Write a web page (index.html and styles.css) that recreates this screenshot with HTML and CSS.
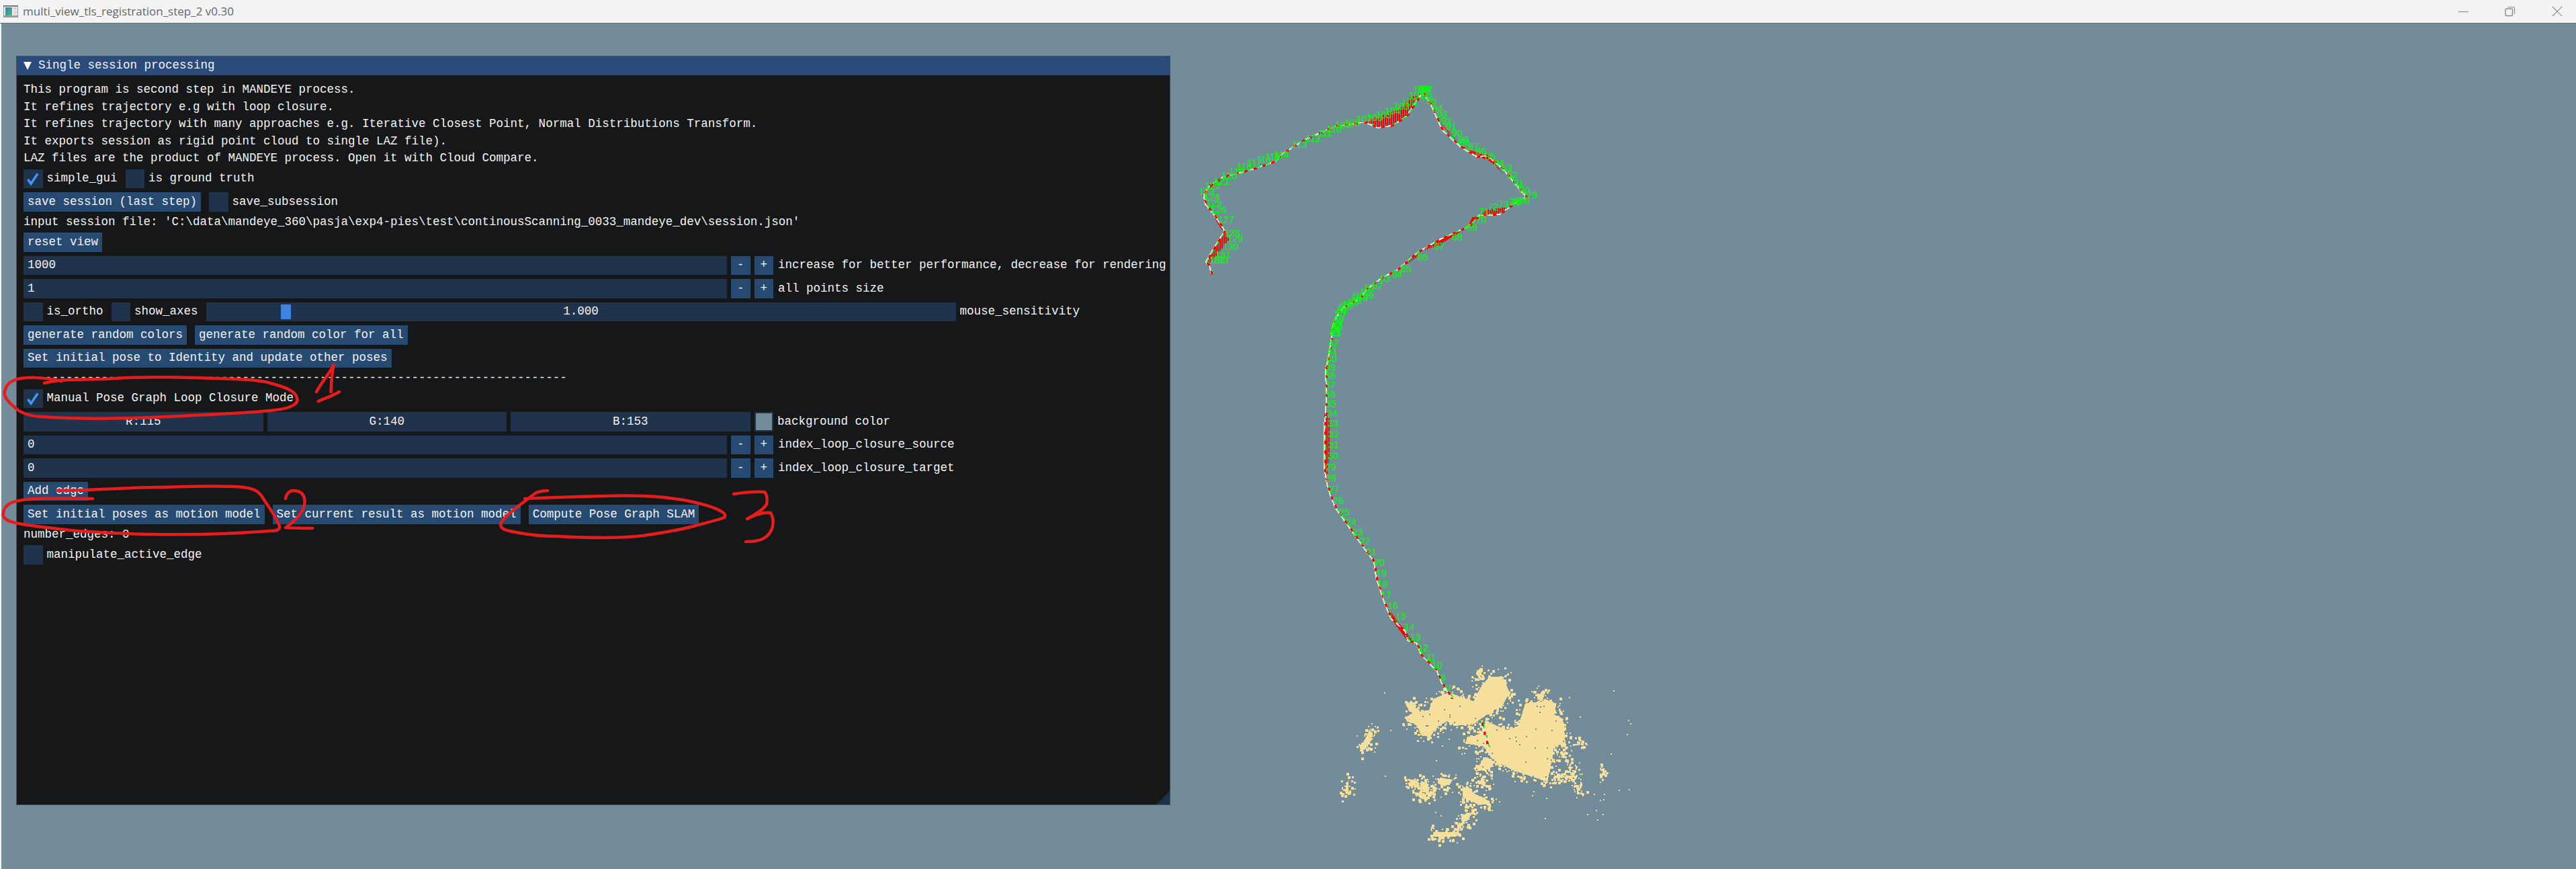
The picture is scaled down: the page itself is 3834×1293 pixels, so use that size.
FILE: index.html
```html
<!DOCTYPE html>
<html lang="en">

<head>
    <meta charset="UTF-8">
    <title>multi_view_tls_registration_step_2 v0.30</title>
    <link rel="stylesheet" href="styles.css">
</head>

<body>
    <div class="titlebar">
        <svg class="app-icon" width="22" height="18" viewBox="0 0 22 18">
            <defs>
                <linearGradient id="iconFill" x1="0" y1="0" x2="1" y2="1">
                    <stop offset="0" stop-color="#2f7fb8" />
                    <stop offset="1" stop-color="#4fc06a" />
                </linearGradient>
            </defs>
            <rect width="22" height="18" fill="#9a9a9a" />
            <rect y="0" width="22" height="1.5" fill="#6a6f78" />
            <rect x="1" y="2" width="20" height="13" fill="#eeeeee" />
            <rect x="3" y="3" width="10" height="12" fill="url(#iconFill)" />
            <rect x="15" y="3" width="5" height="3" fill="#c9d3dc" />
            <rect x="15" y="7" width="5" height="7" fill="#dcdcdc" />
        </svg>
        <span class="window-title">multi_view_tls_registration_step_2 v0.30</span>
        <div class="window-controls">
            <svg width="16" height="16" viewBox="0 0 16 16">
                <path d="M1 8.5H16" stroke="#8c8c8c" stroke-width="1.2" fill="none" />
            </svg>
            <svg width="16" height="16" viewBox="0 0 16 16">
                <rect x="1" y="4" width="10.5" height="10.5" rx="1.5" stroke="#8c8c8c" stroke-width="1.4" fill="none" />
                <path d="M4 1.5H12.5Q14.5 1.5 14.5 3.5V11.5" stroke="#8c8c8c" stroke-width="1.2" fill="none" />
            </svg>
            <svg width="16" height="16" viewBox="0 0 16 16">
                <path d="M1 1L15 15M15 1L1 15" stroke="#8c8c8c" stroke-width="1.2" fill="none" />
            </svg>
        </div>
    </div>

    <div class="viewport">
        <div class="panel">
            <div class="panel-header">
                <span class="arrow-down"></span>
                <span>Single session processing</span>
            </div>
            <div class="panel-body">
                <div class="text">This program is second step in MANDEYE process.</div>
                <div class="text">It refines trajectory e.g with loop closure.</div>
                <div class="text">It refines trajectory with many approaches e.g. Iterative Closest Point, Normal Distributions Transform.</div>
                <div class="text">It exports session as rigid point cloud to single LAZ file).</div>
                <div class="text">LAZ files are the product of MANDEYE process. Open it with Cloud Compare.</div>

                <div class="row">
                    <label class="check">
                        <span class="box"><svg width="28" height="28" viewBox="0 0 28 28"><path d="M6.5 15L11 21.5L21 6.5" stroke="#4296fa" stroke-width="3.5" fill="none" /></svg></span>
                        simple_gui
                    </label>
                    <label class="check"><span class="box"></span>is ground truth</label>
                </div>
                <div class="row">
                    <button class="btn">save session (last step)</button>
                    <label class="check"><span class="box"></span>save_subsession</label>
                </div>
                <div class="text">input session file: 'C:\data\mandeye_360\pasja\exp4-pies\test\continousScanning_0033_mandeye_dev\session.json'</div>
                <div class="row"><button class="btn">reset view</button></div>

                <div class="row row-tight">
                    <div class="field field-input">1000</div>
                    <button class="btn btn-step">-</button>
                    <button class="btn btn-step">+</button>
                    <span class="field-label">increase for better performance, decrease for rendering</span>
                </div>
                <div class="row row-tight">
                    <div class="field field-input">1</div>
                    <button class="btn btn-step">-</button>
                    <button class="btn btn-step">+</button>
                    <span class="field-label">all points size</span>
                </div>
                <div class="row">
                    <label class="check"><span class="box"></span>is_ortho</label>
                    <label class="check"><span class="box"></span>show_axes</label>
                    <div class="row-tight slider-wrap">
                        <div class="slider">
                            <span class="slider-grab"></span>
                            1.000
                        </div>
                        <span>mouse_sensitivity</span>
                    </div>
                </div>
                <div class="row">
                    <button class="btn">generate random colors</button>
                    <button class="btn">generate random color for all</button>
                </div>
                <div class="row"><button class="btn">Set initial pose to Identity and update other poses</button></div>
                <div class="text">-----------------------------------------------------------------------------</div>

                <div class="row">
                    <label class="check">
                        <span class="box"><svg width="28" height="28" viewBox="0 0 28 28"><path d="M6.5 15L11 21.5L21 6.5" stroke="#4296fa" stroke-width="3.5" fill="none" /></svg></span>
                        Manual Pose Graph Loop Closure Mode
                    </label>
                </div>
                <div class="row row-tight">
                    <div class="color-fields">
                        <div class="field field-center">R:115</div>
                        <div class="field field-center">G:140</div>
                        <div class="field field-center">B:153</div>
                    </div>
                    <span class="swatch"></span>
                    <span>background color</span>
                </div>
                <div class="row row-tight">
                    <div class="field field-input">0</div>
                    <button class="btn btn-step">-</button>
                    <button class="btn btn-step">+</button>
                    <span class="field-label">index_loop_closure_source</span>
                </div>
                <div class="row row-tight">
                    <div class="field field-input">0</div>
                    <button class="btn btn-step">-</button>
                    <button class="btn btn-step">+</button>
                    <span class="field-label">index_loop_closure_target</span>
                </div>
                <div class="row"><button class="btn">Add edge</button></div>
                <div class="row">
                    <button class="btn">Set initial poses as motion model</button>
                    <button class="btn">Set current result as motion model</button>
                    <button class="btn">Compute Pose Graph SLAM</button>
                </div>
                <div class="text">number_edges: 0</div>
                <div class="row">
                    <label class="check"><span class="box"></span>manipulate_active_edge</label>
                </div>
            </div>
            <span class="resize-grip"></span>
        </div>
    </div>

    <svg class="scene" id="scene" width="3834" height="1293" viewBox="0 0 3834 1293">
        <defs>
            <pattern id="hatch" width="3" height="3" patternUnits="userSpaceOnUse">
                <rect width="2" height="3" fill="#ff0000" />
            </pattern>
        </defs>
        <g id="cloud" class="crisp" fill="#f6df9a"></g>
        <g id="hatched" class="crisp" fill="url(#hatch)"></g>
        <g id="track" class="crisp" fill="none"></g>
        <g id="labels" class="point-label"></g>
        <g class="pen">
            <path d="M66 570C95 562 130 566 172 563C220 559 280 562 321 563C360 564 385 565 402 570C425 576 440 582 442 592C445 600 436 608 402 611C360 615 330 616 287 618C220 622 130 625 63 620C40 619 28 612 23 607C12 598 5 590 7 583C9 572 15 568 23 565C35 561 60 560 92 567" />
            <path d="M496.6 543C490 556 478 570 471 583M496.6 543C494 556 493 570 492.5 583M473.6 597C485 592 495 589 505 583" />
            <path d="M86 730C130 730 180 726 230 725C280 724 330 722 362 725C380 727 386 732 392 742C400 755 412 770 416 783C417 788 412 790 402 790C350 794 280 796 230 795C190 795 150 792 115 790C80 786 45 783 23 778C10 775 4 770 4.6 765C5 757 10 751 17 748C30 743 50 742 57 742C90 741 115 742 138 742" />
            <path d="M425 742C426 735 431 730 436 730C447 730 453 735 453.5 745C454 755 448 765 440 773C435 778 430 782 425 785C440 786 452 786 465 786" />
            <path d="M815 730C806 730 802 732 798 733C775 750 755 765 746 777C743 784 748 788 758 790C785 796 810 798 832 798C860 800 880 800 900 800C925 800 940 799 957 797C985 793 1010 789 1032 783C1050 778 1068 774 1078 770C1080 766 1079 764 1075 762C1065 755 1050 751 1032 747C1010 742 985 739 957 738C930 737 910 738 900 738C860 739 820 740 781 742" />
            <path d="M1092 735C1105 733 1125 731 1138 732C1142 736 1142 745 1141 750C1137 758 1125 765 1112 772C1120 768 1135 762 1147 763C1151 770 1151 775 1150 783C1148 792 1143 798 1135 802C1128 805 1118 806 1110 806" />
        </g>
    </svg>

    <script src="script.js"></script>
</body>

</html>
```

FILE: styles.css
```css
* {
    box-sizing: border-box;
}

html,
body {
    margin: 0;
    height: 100%;
}

body {
    width: 3834px;
    height: 1293px;
    display: flex;
    flex-direction: column;
    position: relative;
    overflow: hidden;
    background-color: #738c99;
    color: #f4f4f4;
    font-family: "Liberation Mono", monospace;
    font-size: 17.5px;
    line-height: 19.5px;
}

.titlebar {
    height: 35px;
    flex: none;
    display: flex;
    align-items: center;
    background-color: #f3f3f3;
    border-bottom: 1px solid #5d6c74;
    padding-left: 5px;
    color: #666;
    font-family: "Open Sans", sans-serif;
    font-size: 17px;
}

.app-icon {
    margin-right: 7px;
}

.window-controls {
    margin-left: auto;
    margin-right: 20px;
    display: flex;
    gap: 54px;
}

.viewport {
    flex: 1;
    padding: 48px 0 0 24px;
    border-left: 2px solid #f3f3f3;
}

.panel {
    width: 1718px;
    height: 1115px;
    margin-left: -2px;
    background-color: #151718;
    border: 1px solid #4c505e;
    position: relative;
}

.panel-header {
    height: 28px;
    display: flex;
    align-items: center;
    padding-left: 10px;
    background-color: #294a7a;
}

.arrow-down {
    width: 0;
    height: 0;
    border-left: 6px solid transparent;
    border-right: 6px solid transparent;
    border-top: 12px solid #fff;
    margin-right: 10px;
}

.panel-body {
    padding: 12px 10px;
    display: flex;
    flex-direction: column;
    gap: 6px;
}

.text {
    height: 19.5px;
    white-space: pre;
}

.row {
    height: 28.5px;
    display: flex;
    align-items: center;
    gap: 12px;
    white-space: nowrap;
}

.row-tight {
    display: flex;
    align-items: center;
    gap: 6px;
}

.check {
    display: flex;
    align-items: center;
    gap: 6px;
    flex: none;
}

.box {
    width: 28.5px;
    height: 28.5px;
    flex: none;
    background-color: #20334d;
    display: flex;
    align-items: center;
    justify-content: center;
}

.btn {
    height: 28.5px;
    padding: 0 6px;
    border: none;
    background-color: #274a72;
    color: #f4f4f4;
    font: inherit;
    flex: none;
}

.btn-step {
    width: 28.5px;
    padding: 0;
}

.field {
    height: 28.5px;
    background-color: #20334d;
    display: flex;
    align-items: center;
    padding: 0 6px;
}

.field-input {
    width: 1047px;
    flex: none;
}

.field-center {
    flex: 1;
    justify-content: center;
}

.color-fields {
    width: 1081.5px;
    flex: none;
    display: flex;
    gap: 6px;
}

.field-label {
    margin-left: 1px;
    flex: none;
}

.swatch {
    width: 28.5px;
    height: 28.5px;
    flex: none;
    background-color: #738c99;
    border: 2px solid #20334d;
}

.slider-wrap {
    flex: none;
}

.slider {
    width: 1116px;
    height: 28.5px;
    background-color: #20334d;
    display: flex;
    align-items: center;
    justify-content: center;
    position: relative;
}

.slider-grab {
    position: absolute;
    left: 111px;
    top: 3.5px;
    width: 15px;
    height: 22px;
    background-color: #3d85e0;
}

.resize-grip {
    position: absolute;
    right: 0;
    bottom: 0;
    width: 20px;
    height: 20px;
    background-color: #1e3045;
    clip-path: polygon(100% 0, 100% 100%, 0 100%);
}

.scene {
    position: absolute;
    left: 0;
    top: 0;
    pointer-events: none;
}

.crisp {
    shape-rendering: crispEdges;
}

.point-label {
    font-family: "Liberation Sans", sans-serif;
    font-size: 14px;
    fill: #00ff00;
    text-anchor: middle;
}

.pen {
    fill: none;
    stroke: #e71c1c;
    stroke-width: 4.5;
    stroke-linecap: round;
    stroke-linejoin: round;
}
```

FILE: script.js
```js
const NS = "http://www.w3.org/2000/svg";

// main trajectory, page coordinates
const upperTrack = [[1802.7, 408.3], [1800.4, 396.7], [1794.6, 390], [1805, 371.7], [1822.8, 343.3], [1807, 320], [1793.8, 303.3], [1791.5, 290], [1800.4, 276.7], [1820.5, 263.3], [1865, 251.7], [1898.7, 240], [1909.8, 228.3], [1941, 208.3], [1985.7, 188.3], [2030.4, 181.7], [2050.4, 190], [2072.8, 186.7], [2092.9, 173.3], [2113, 143.3], [2119.6, 140], [2130.8, 158.3], [2146.4, 193.3], [2173.2, 218.3], [2197.8, 233.3], [2213.4, 231.7], [2235.7, 250], [2271.4, 293.3], [2258, 300], [2231.3, 319.3], [2202.2, 320], [2186.6, 336.7], [2142, 356.7], [2110.7, 375], [2079.5, 401.7], [2057, 413.3], [2034.8, 430], [2023, 445], [2000, 457], [1988.3, 472.8], [1983.3, 486.8], [1981.7, 502.6], [1977.3, 530.7], [1972.7, 551.7], [1974, 576.3], [1973.3, 614.8], [1971, 632.4], [1971, 695.5], [1975, 720], [1980, 737.6], [1988.3, 757], [2016.7, 797], [2045, 835.8], [2048.3, 860.4], [2060, 895.5], [2070, 920], [2091.7, 939.3], [2095, 953.3], [2108.3, 956.8], [2115, 974.4], [2138.3, 998], [2145, 1015], [2160, 1038]];
const lowerTrack = [[2205, 1075], [2208.3, 1090], [2215, 1113.3]];

// crop helpers: points below were read off zoomed crops of the top and middle of the track
const top5 = ([x, y]) => [1700 + x / 2.24, 100 + y / 3];
const mid6 = ([x, y]) => [1900 + x / 3, 450 + y / 2.851];
const low7 = ([x, y]) => [1960 + x / 3, 950 + y / 3];

const hatchedShapes = [
    [[740, 245], [785, 270], [835, 260], [880, 220], [925, 130], [895, 130], [860, 185], [800, 215]].map(top5),
    [[275, 730], [290, 770], [225, 875], [212, 870], [240, 810]].map(top5),
    [[1125, 660], [1190, 658], [1225, 625], [1150, 635]].map(top5),
    [[920, 825], [990, 770], [1005, 790], [930, 820]].map(top5),
    [[880, 880], [925, 840], [905, 835]].map(top5),
    [[213, 490], [238, 490], [238, 640], [225, 740], [215, 700]].map(mid6),
];

const solidShapes = [
    [[200, 570], [235, 530], [270, 490], [260, 495], [225, 525], [205, 590], [230, 650], [215, 610]].map(top5),
    [[985, 235], [1010, 270], [1060, 345], [1115, 395], [1160, 420], [1200, 470], [1160, 400], [1070, 360], [1020, 290]].map(top5),
    [[990, 770], [1090, 710], [1120, 665], [1100, 670], [1085, 715], [1000, 785]].map(top5),
    [[240, 670], [275, 725], [265, 725]].map(top5),
    [[490, 1290], [575, 1395], [610, 1440], [580, 1430], [510, 1340]].map(mid6),
    [[213, 470], [228, 470], [228, 500], [213, 500]].map(mid6),
    [[595, 255], [610, 268], [600, 272]].map(low7),
];

// label number -> centre of the number
const labels = {
    7: [2157, 1024], 8: [2148, 1008], 10: [2139, 990], 11: [2130, 978], 12: [2118, 964], 13: [2107, 948], 14: [2098, 933], 15: [2085, 917],
    16: [2073, 901], 17: [2063, 885], 18: [2058, 869], 19: [2056, 853], 20: [2053, 837], 21: [2041, 821], 22: [2032, 805], 23: [2021, 792],
    24: [2011, 777], 25: [2001, 762], 26: [1992, 745], 27: [1986, 728], 28: [1981, 711], 29: [1981, 695], 30: [1984, 678], 31: [1985, 662],
    32: [1985, 646], 33: [1984, 630], 34: [1983, 615], 35: [1981, 601], 36: [1980, 587], 37: [1980, 573], 38: [1980, 559], 39: [1980, 547],
    40: [1982, 534], 41: [1983, 522], 42: [1985, 510], 43: [1988, 496], 44: [1991, 485],
};
const topLabels = {
    45: [642, 1185], 46: [645, 1170], 47: [648, 1155], 48: [650, 1140], 49: [655, 1125], 50: [660, 1100], 51: [668, 1085], 52: [672, 1075],
    53: [680, 1065], 54: [690, 1060], 55: [705, 1050], 56: [715, 1040], 57: [720, 1020], 58: [735, 1030], 59: [755, 1020], 60: [745, 1005],
    61: [760, 985], 62: [785, 975], 63: [810, 945], 64: [850, 925], 65: [880, 900], 66: [935, 850], 67: [990, 800], 68: [1050, 760],
    69: [1100, 715], 70: [1130, 680], 71: [1140, 645], 72: [1170, 625], 73: [1205, 612], 74: [1240, 602], 75: [1250, 600], 76: [1245, 600],
    77: [1265, 595], 78: [1275, 595], 79: [1300, 570], 80: [1275, 550], 81: [1255, 515], 82: [1235, 480], 83: [1215, 450], 84: [1190, 430],
    85: [1160, 400], 86: [1130, 375], 87: [1105, 355], 88: [1075, 335], 89: [1070, 325], 90: [1050, 295], 91: [1030, 265], 92: [1015, 240],
    93: [1000, 210], 94: [985, 182], 95: [965, 150], 96: [950, 125], 97: [952, 100], 98: [945, 98], 99: [935, 95], 100: [930, 100],
    101: [915, 125], 102: [890, 155], 103: [865, 175], 104: [835, 195], 105: [805, 212], 106: [775, 225], 107: [740, 232], 108: [700, 250],
    109: [670, 258], 110: [640, 275], 111: [610, 295], 112: [570, 318], 113: [525, 345], 114: [465, 390], 115: [435, 400], 116: [405, 410],
    117: [375, 425], 118: [340, 445], 119: [315, 465], 120: [290, 485], 121: [265, 510], 122: [235, 530], 123: [215, 555], 124: [232, 580],
    125: [240, 605], 126: [255, 635], 127: [280, 680], 128: [300, 740], 129: [310, 765], 130: [295, 800], 131: [270, 838], 132: [250, 860], 133: [262, 862],
};

// point cloud blobs around the start of the track, crop coordinates
const blobs = [
    [[400, 350], [430, 330], [500, 320], [520, 270], [590, 240], [640, 260], [700, 280], [730, 220], [770, 170], [830, 170], [860, 240], [830, 300], [790, 320], [760, 340], [700, 380], [620, 390], [580, 370], [530, 400], [510, 435], [470, 435], [450, 395]],
    [[670, 440], [730, 430], [760, 370], [850, 410], [900, 390], [930, 290], [1010, 280], [1070, 290], [1060, 340], [1100, 360], [1110, 470], [1060, 480], [1040, 590], [1030, 640], [970, 620], [880, 590], [800, 550], [770, 510], [740, 480], [665, 470]],
    [[700, 580], [730, 560], [760, 530], [790, 550], [770, 585], [710, 592]],
    [[412, 630], [440, 630], [445, 670], [420, 650]],
    [[465, 635], [500, 650], [495, 680], [465, 670]],
    [[550, 620], [600, 630], [600, 645], [570, 660], [545, 650]],
    [[650, 680], [670, 655], [700, 690], [770, 725], [770, 740], [720, 740], [650, 710]],
    [[715, 632], [755, 640], [750, 655], [720, 650]],
    [[435, 685], [490, 695], [490, 715], [440, 700]],
    [[645, 790], [700, 772], [670, 815], [645, 815]],
    [[520, 865], [620, 865], [620, 885], [520, 885]],
    [[125, 680], [140, 630], [140, 690], [130, 695]],
    [[190, 490], [220, 440], [240, 400], [240, 460], [215, 495]],
    [[515, 650], [540, 670], [520, 685]],
    [[1070, 600], [1100, 615], [1165, 610], [1160, 625], [1075, 620]],
    [[625, 850], [650, 830], [640, 850]],
    [[1090, 530], [1115, 500], [1105, 535]],
    [[1150, 470], [1170, 470], [1170, 476], [1150, 476]],
    [[1125, 570], [1135, 570], [1135, 600], [1125, 600]],
    [[1160, 655], [1170, 655], [1168, 690], [1160, 690]],
    [[1275, 580], [1285, 580], [1283, 600], [1275, 600]],
    [[985, 260], [1010, 230], [1020, 240], [1000, 280]],
    [[710, 160], [730, 130], [738, 165], [720, 170]],
    [[395, 295], [440, 285], [440, 330], [420, 330]],
];

function add(groupId, tag, attrs, text) {
    const el = document.createElementNS(NS, tag);
    for (const name in attrs) {
        el.setAttribute(name, attrs[name]);
    }
    if (text !== undefined) {
        el.textContent = text;
    }
    document.getElementById(groupId).appendChild(el);
    return el;
}

const toPoints = (pts) => pts.map((p) => p[0].toFixed(1) + "," + p[1].toFixed(1)).join(" ");

// fixed seed so the cloud is the same every load
let seed = 12345;
function rand() {
    seed = (seed * 1103515245 + 12345) % 2147483648;
    return seed / 2147483648;
}

function dot(x, y, size, fill) {
    const attrs = { x: Math.round(x), y: Math.round(y), width: size, height: size };
    if (fill) {
        attrs.fill = fill;
    }
    add("cloud", "rect", attrs);
}

function drawCloud() {
    blobs.forEach((blob) => {
        const pts = blob.map(low7);
        add("cloud", "polygon", { points: toPoints(pts) });

        // roughen each blob by throwing dots along its outline
        pts.forEach((a, i) => {
            const b = pts[(i + 1) % pts.length];
            const count = Math.hypot(b[0] - a[0], b[1] - a[1]) / 1.6;
            for (let k = 0; k < count; k++) {
                const t = rand();
                const jitterX = (rand() + rand() - 1) * 14;
                const jitterY = (rand() + rand() - 1) * 14;
                dot(a[0] + (b[0] - a[0]) * t + jitterX, a[1] + (b[1] - a[1]) * t + jitterY, 2 + Math.floor(rand() * 3));
            }
        });
    });

    // loose points further out
    for (let i = 0; i < 70; i++) {
        dot(2040 + rand() * 390, 1015 + rand() * 205, 2);
    }
    // small holes in the dense part
    for (let i = 0; i < 90; i++) {
        dot(2100 + rand() * 260, 1050 + rand() * 110, 2, "#738c99");
    }
}

function drawTrack() {
    hatchedShapes.forEach((s) => add("hatched", "polygon", { points: toPoints(s) }));
    solidShapes.forEach((s) => add("hatched", "polygon", { points: toPoints(s), fill: "#ff0000" }));

    [upperTrack, lowerTrack].forEach((line) => {
        const pts = toPoints(line);
        add("track", "polyline", { points: pts, stroke: "#e4e4e4", "stroke-width": 2 });
        add("track", "polyline", { points: toPoints(line.map((p) => [p[0] + 2, p[1] - 1])), stroke: "#00ff00", "stroke-width": 1.5, "stroke-dasharray": "9 7" });
        add("track", "polyline", { points: toPoints(line.map((p) => [p[0] + 1, p[1]])), stroke: "#ff0000", "stroke-width": 3, "stroke-dasharray": "5 9" });
    });
}

function drawLabels() {
    for (const n in labels) {
        add("labels", "text", { x: labels[n][0], y: labels[n][1] + 5 }, n);
    }
    for (const n in topLabels) {
        const p = top5(topLabels[n]);
        add("labels", "text", { x: p[0].toFixed(1), y: (p[1] + 5).toFixed(1) }, n);
    }
}

drawCloud();
drawTrack();
drawLabels();
```
